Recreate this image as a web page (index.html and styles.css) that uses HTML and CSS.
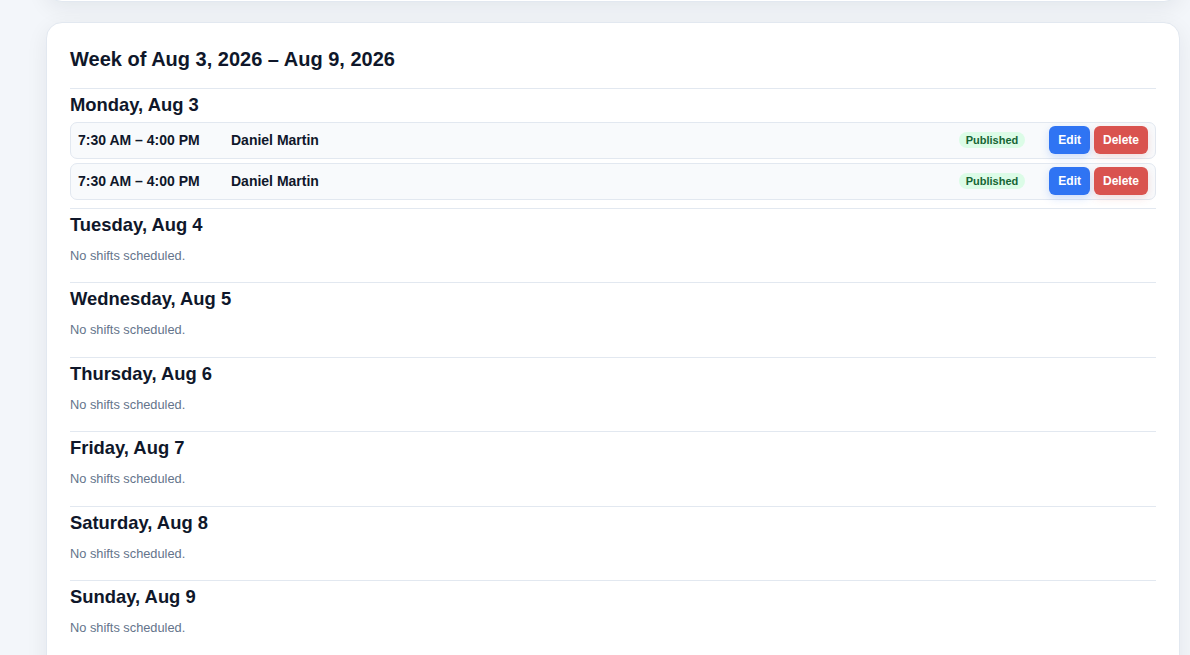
FILE: index.html
```html
<!DOCTYPE html>
<html lang="en">
<head>
<meta charset="utf-8">
<title>Schedule</title>
<link rel="stylesheet" href="styles.css">
</head>
<body>
<main class="page">
  <section class="card card-prev"></section>
  <section class="card week">
    <h2 class="week-title">Week of Aug 3, 2026 – Aug 9, 2026</h2>

    <div class="day">
      <h3 class="day-title">Monday, Aug 3</h3>
      <div class="shifts">
        <div class="shift">
          <span class="shift-time">7:30 AM – 4:00 PM</span>
          <span class="shift-name">Daniel Martin</span>
          <span class="badge">Published</span>
          <div class="actions">
            <button class="btn btn-edit">Edit</button>
            <button class="btn btn-delete">Delete</button>
          </div>
        </div>
        <div class="shift">
          <span class="shift-time">7:30 AM – 4:00 PM</span>
          <span class="shift-name">Daniel Martin</span>
          <span class="badge">Published</span>
          <div class="actions">
            <button class="btn btn-edit">Edit</button>
            <button class="btn btn-delete">Delete</button>
          </div>
        </div>
      </div>
    </div>

    <div class="day">
      <h3 class="day-title">Tuesday, Aug 4</h3>
      <p class="empty">No shifts scheduled.</p>
    </div>
    <div class="day">
      <h3 class="day-title">Wednesday, Aug 5</h3>
      <p class="empty">No shifts scheduled.</p>
    </div>
    <div class="day">
      <h3 class="day-title">Thursday, Aug 6</h3>
      <p class="empty">No shifts scheduled.</p>
    </div>
    <div class="day">
      <h3 class="day-title">Friday, Aug 7</h3>
      <p class="empty">No shifts scheduled.</p>
    </div>
    <div class="day">
      <h3 class="day-title">Saturday, Aug 8</h3>
      <p class="empty">No shifts scheduled.</p>
    </div>
    <div class="day">
      <h3 class="day-title">Sunday, Aug 9</h3>
      <p class="empty">No shifts scheduled.</p>
    </div>
  </section>
</main>
</body>
</html>
```

FILE: styles.css
```css
* { box-sizing: border-box; }

html, body {
  margin: 0;
  padding: 0;
}

body {
  background: #f3f6fa;
  font-family: "Liberation Sans", Arial, sans-serif;
  color: #0f172a;
  overflow: hidden;
}

.page {
  padding: 0 10px 40px 46px;
  display: flex;
  flex-direction: column;
  gap: 20px;
}

.card {
  background: #ffffff;
  border: 1px solid #e2e8f0;
  border-radius: 16px;
  box-shadow: 0 6px 22px rgba(15, 23, 42, 0.07);
}

.card-prev {
  height: 60px;
  margin-top: -58px;
}

.week {
  padding: 23px 23px 60px;
}

.week-title {
  margin: 1px 0 17px;
  font-size: 20px;
  line-height: 24px;
  font-weight: 700;
  color: #0f172a;
}

.day {
  border-top: 1px solid #e2e8f0;
  padding: 5px 0 8.5px;
}

.day-title {
  margin: 0 0 5.5px;
  font-size: 18.4px;
  line-height: 22px;
  font-weight: 700;
  color: #0f172a;
}

.empty {
  margin: 0;
  padding: 6.5px 0 9.9px;
  font-size: 12.8px;
  line-height: 16px;
  color: #64748b;
}

.shifts {
  display: flex;
  flex-direction: column;
  gap: 4px;
}

.shift {
  display: flex;
  align-items: center;
  height: 37px;
  padding: 4px 7px;
  background: #f8fafc;
  border: 1px solid #e2e8f0;
  border-radius: 7px;
  font-size: 14px;
  font-weight: 700;
  color: #0f172a;
}

.shift-time {
  flex: 0 0 153px;
}

.shift-name {
  flex: 1 1 auto;
}

.badge {
  background: #dcfce7;
  color: #166534;
  font-size: 11px;
  font-weight: 700;
  line-height: 16px;
  padding: 0 7px;
  border-radius: 999px;
  margin-right: 24px;
}

.actions {
  display: flex;
  gap: 4px;
}

.btn {
  height: 28px;
  border: none;
  border-radius: 6px;
  padding: 0 9px;
  font-family: "Liberation Sans", Arial, sans-serif;
  font-size: 12px;
  font-weight: 700;
  color: #ffffff;
  cursor: pointer;
}

.btn-edit {
  background: #2f74f3;
  box-shadow: 0 3px 8px rgba(47, 116, 243, 0.22);
}

.btn-delete {
  background: #d9534f;
  box-shadow: 0 3px 8px rgba(217, 83, 79, 0.18);
}
```
